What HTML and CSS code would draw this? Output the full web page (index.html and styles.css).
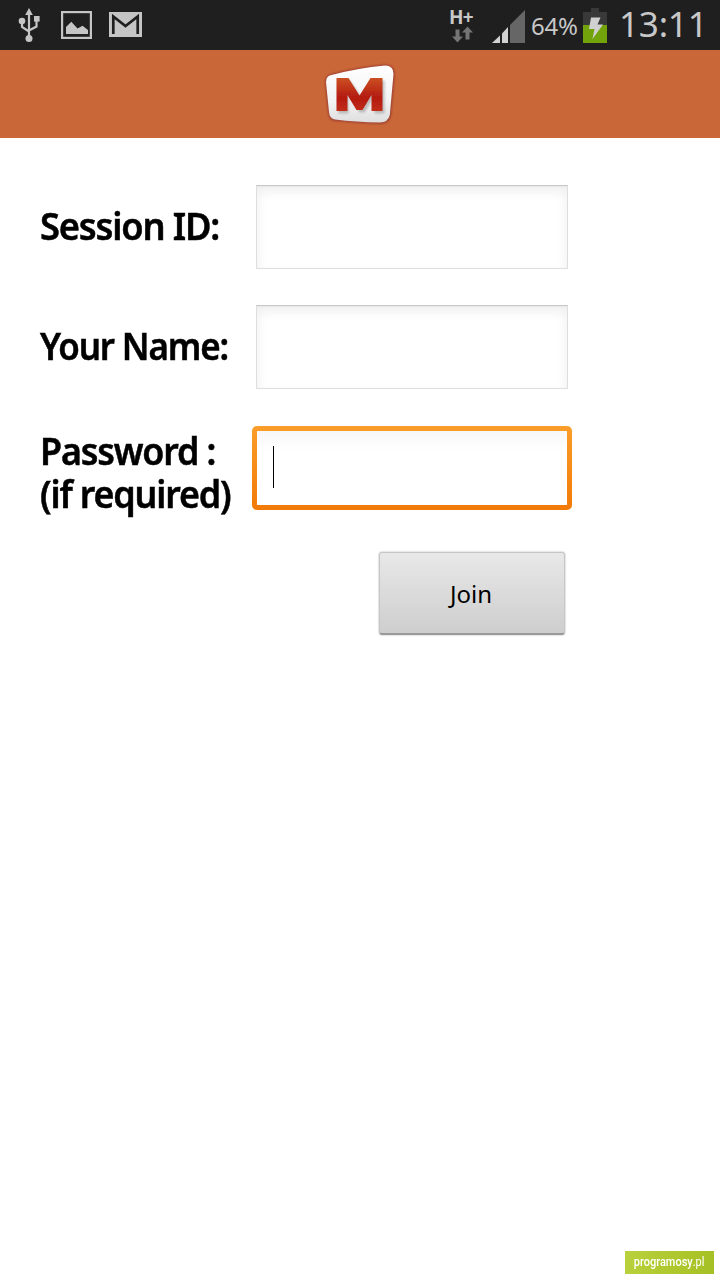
FILE: index.html
```html
<!DOCTYPE html>
<html lang="en">
<head>
<meta charset="utf-8">
<title>Join session</title>
<link rel="stylesheet" href="styles.css">
</head>
<body>
<div class="screen">
  <header class="status">
    <svg class="usb" width="24" height="36" viewBox="0 0 24 36" fill="none" stroke="#c5c5c5" stroke-width="2.2">
      <path d="M12 8V32M5 15V21L12 25.500M19.500 13V20.500L12 24.500"/>
      <path d="M12 2L15.800 9H8.200Z" fill="#c5c5c5" stroke="none"/>
      <circle cx="5" cy="15" r="3.300" fill="#c5c5c5" stroke="none"/>
      <rect x="17" y="10" width="5.600" height="5.600" fill="#c5c5c5" stroke="none"/>
      <circle cx="12" cy="32.500" r="3.500" fill="#c5c5c5" stroke="none"/>
    </svg>
    <svg class="picture" width="31" height="28" viewBox="0 0 31 28">
      <rect x="1.100" y="1.100" width="28.800" height="25.800" fill="none" stroke="#c5c5c5" stroke-width="2.200"/>
      <path d="M5 23V16L10.300 10.800 16.500 17.500 21.500 14.800 27 19V23Z" fill="#c5c5c5"/>
    </svg>
    <svg class="mail" width="33" height="25" viewBox="0 0 33 25">
      <path d="M0 0H33V25H0Z" fill="#c5c5c5"/>
      <path d="M4.300 22V4.500L16.500 14 28.700 4.500V22" fill="none" stroke="#1f1f1f" stroke-width="2.700"/>
    </svg>
    <div class="network">
      <span class="network-type">H+</span>
      <svg width="22" height="17" viewBox="0 0 22 17" fill="#757575">
        <path d="M3.500 3.500H7.500V10.500H11L5.500 16.500 0 10.500H3.500Z"/>
        <path d="M13.500 13.500H17.500V6.500H21L15.500 .5 10 6.500H13.500Z"/>
      </svg>
    </div>
    <svg class="signal" width="33" height="33" viewBox="0 0 33 33">
      <path d="M0 33L8 25.500V33Z" fill="#d2d2d2"/>
      <path d="M10 33V23.500L16 17V33Z" fill="#d2d2d2"/>
      <path d="M18 33V15L33 0V33Z" fill="#666"/>
    </svg>
    <span class="percent">64%</span>
    <svg class="battery" width="24" height="35" viewBox="0 0 24 35">
      <path d="M8 0H16V4H24V17H0V4H8Z" fill="#393939"/>
      <path d="M0 17H24V35H0Z" fill="#73a30b"/>
      <path d="M8 9.500H17.500L14.500 16.500H20L9.500 31 11.500 21H6Z" fill="#d0d0d0"/>
    </svg>
    <span class="clock">13:11</span>
  </header>
  <div class="brand">
    <svg width="76" height="66" viewBox="0 0 76 66">
      <defs>
        <linearGradient id="tile" x1="0" y1="0" x2="0" y2="1"><stop offset="0" stop-color="#fff"/><stop offset=".65" stop-color="#f2f2f2"/><stop offset="1" stop-color="#dedede"/></linearGradient>
        <linearGradient id="letter" x1="0" y1="0" x2="0" y2="1"><stop offset="0" stop-color="#cb5023"/><stop offset=".6" stop-color="#b41a10"/><stop offset="1" stop-color="#c02e15"/></linearGradient>
        <filter id="soft" x="-10%" y="-10%" width="120%" height="120%"><feGaussianBlur stdDeviation=".8"/></filter>
        <filter id="edge" x="-10%" y="-10%" width="120%" height="120%"><feGaussianBlur stdDeviation=".35"/></filter>
      </defs>
      <path d="M3 20Q3 14 9 12Q36 5 63 2.500Q73 2.500 72.800 13L69 54Q67 62 58 62Q34 61 13 59Q6.500 58 6 51Z" fill="#9f3f31" filter="url(#soft)"/>
      <path d="M4 20Q4 14 9.500 13Q36 6 63 3.500Q71.500 3.500 71.500 12L67.800 53Q66 60.500 58 60.500Q34 60 13 57.500Q7.500 57 7 50Z" fill="url(#tile)" filter="url(#edge)"/>
      <path d="M15 17H26.500L38 33.500 49.500 17H61V50H51V33L41 49H36L25 33V50H15Z" fill="#999" opacity=".6" transform="translate(1.500 1.500)" filter="url(#soft)"/>
      <path d="M14.500 16H26.500L37.500 33.500 48.500 16H60.500V49H49.500V33L40.500 48H34.500L25.500 33V49H14.500Z" fill="url(#letter)" filter="url(#edge)"/>
    </svg>
  </div>
  <main class="form">
    <div class="label session"><span>Session ID:</span></div>
    <div class="field"></div>
    <div class="label name"><span>Your Name:</span></div>
    <div class="field"></div>
    <div class="label password"><span>Password :<br>(if required)</span></div>
    <div class="field focused"><i class="caret"></i></div>
    <button class="join">Join</button>
  </main>
  <footer class="footer"><span class="mark"><span class="mark-text"><b>programosy</b>.pl</span></span></footer>
</div>
</body>
</html>
```
FILE: styles.css
```css
* { box-sizing: border-box; }
body { margin: 0; font-family: "Noto Sans", sans-serif; }
.screen { width: 720px; height: 1280px; background: #fff; display: flex; flex-direction: column; overflow: hidden; }
.status { height: 50px; flex: none; background: #1f1f1f; color: #c8c8c8; display: flex; align-items: flex-start; padding-left: 17px; }
.status svg { display: block; flex: none; }
.usb { margin-top: 6px; }
.picture { margin: 11px 0 0 20px; }
.mail { margin: 12px 0 0 17px; }
.network { width: 43px; margin: 8px 0 0 307px; flex: none; }
.network svg { margin: 1px 0 0 3px; }
.network-type { display: block; height: 17px; line-height: 18px; font-size: 19px; font-weight: 700; letter-spacing: -.9px; }
.signal { margin-top: 10px; }
.percent { width: 58px; padding-left: 6px; font-size: 24px; line-height: 50px; letter-spacing: -.2px; margin-top: 1px; }
.battery { margin-top: 8px; }
.clock { font-size: 35px; line-height: 48px; padding-left: 12px; letter-spacing: -.2px; }
.brand { height: 88px; flex: none; background: #ca6738; padding: 12px 0 0 322px; }
.brand svg { display: block; }
.form { flex: 1; padding: 47px 0 0 40px; display: grid; grid-template-columns: 216px 312px; grid-auto-rows: 84px; row-gap: 36px; align-content: start; }
.label { font-size: 37px; font-weight: 600; line-height: 43px; letter-spacing: -1.2px; color: #000; display: flex; align-items: center; white-space: nowrap; padding-bottom: 4px; -webkit-text-stroke: .5px #000; }
.label span { display: block; transform-origin: left; }
.session span { transform: scaleX(.98); }
.name span { transform: scaleX(.945); }
.password span { transform: scaleX(.969); }
.password { padding: 10px 0 0; }
.field { background: #fff; border: 1px solid #dedede; border-top-color: #c9c9c9; box-shadow: inset 0 1px #e8e8e8, inset 0 5px 12px rgba(0,0,0,.07); }
.focused { margin: 1px -4px -1px; border: 5px solid transparent; border-radius: 5px; background: linear-gradient(#f7f7f7, #fff 20px) padding-box, linear-gradient(#fb9d2a, #f27a08) border-box; box-shadow: none; }
.caret { display: block; width: 1px; height: 42px; margin: 15px 0 0 16px; background: #000; }
.join { grid-column: 2; justify-self: end; width: 186px; height: 83px; margin: 7px 3px 0 0; padding: 0 2px 0 0; border: 1px solid #c5c5c5; border-bottom: 2px solid #999; border-radius: 3px; background: linear-gradient(#e8e8e8, #cecece); box-shadow: 0 0 2px rgba(0,0,0,.35); font: 24px "Noto Sans", sans-serif; color: #000; }
.footer { flex: none; height: 29px; display: flex; justify-content: flex-end; padding-right: 6px; }
.mark { width: 89px; height: 23px; background: linear-gradient(100deg, #b9d13c, #a5c023); color: #fff; display: flex; justify-content: center; font: 12.5px/22px Roboto, sans-serif; }
.mark-text { transform: scaleX(.88); white-space: nowrap; }
.mark b { font-weight: 500; }
```
